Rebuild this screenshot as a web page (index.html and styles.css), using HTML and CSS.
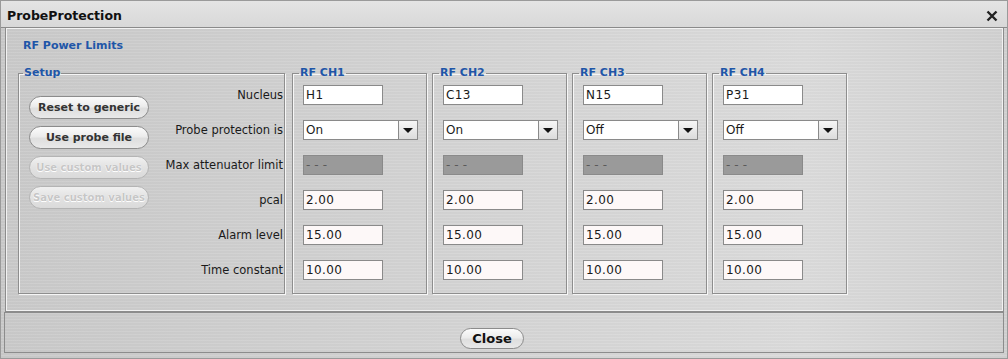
FILE: index.html
```html
<!DOCTYPE html>
<html lang="en">
<head>
    <meta charset="UTF-8">
    <title>ProbeProtection</title>
    <link rel="stylesheet" href="styles.css">
</head>
<body>
    <div class="window">
        <div class="titlebar">
            <span class="title">ProbeProtection</span>
            <svg class="title-close" width="12" height="12" viewBox="0 0 12 12">
                <path d="M1.5 1.5 L10.5 10.5 M10.5 1.5 L1.5 10.5" stroke="#222" stroke-width="2.4" fill="none"/>
            </svg>
        </div>
        <div class="frame">
            <div class="panel">
                <div class="panel-title">RF Power Limits</div>
                <div class="groups">
                    <fieldset class="group setup">
                        <legend>Setup</legend>
                        <div class="setup-inner">
                            <div class="buttons">
                                <button class="pill">Reset to generic</button>
                                <button class="pill">Use probe file</button>
                                <button class="pill" disabled>Use custom values</button>
                                <button class="pill" disabled>Save custom values</button>
                            </div>
                            <div class="labels">
                                <div class="row">Nucleus</div>
                                <div class="row">Probe protection is</div>
                                <div class="row">Max attenuator limit</div>
                                <div class="row">pcal</div>
                                <div class="row">Alarm level</div>
                                <div class="row">Time constant</div>
                            </div>
                        </div>
                    </fieldset>

                    <fieldset class="group channel">
                        <legend>RF CH1</legend>
                        <div class="fields">
                            <div class="field plain">H1</div>
                            <div class="combo"><span class="combo-text">On</span><span class="combo-btn"><i class="arrow"></i></span></div>
                            <div class="field off">---</div>
                            <div class="field">2.00</div>
                            <div class="field">15.00</div>
                            <div class="field">10.00</div>
                        </div>
                    </fieldset>

                    <fieldset class="group channel">
                        <legend>RF CH2</legend>
                        <div class="fields">
                            <div class="field plain">C13</div>
                            <div class="combo"><span class="combo-text">On</span><span class="combo-btn"><i class="arrow"></i></span></div>
                            <div class="field off">---</div>
                            <div class="field">2.00</div>
                            <div class="field">15.00</div>
                            <div class="field">10.00</div>
                        </div>
                    </fieldset>

                    <fieldset class="group channel">
                        <legend>RF CH3</legend>
                        <div class="fields">
                            <div class="field plain">N15</div>
                            <div class="combo"><span class="combo-text">Off</span><span class="combo-btn"><i class="arrow"></i></span></div>
                            <div class="field off">---</div>
                            <div class="field">2.00</div>
                            <div class="field">15.00</div>
                            <div class="field">10.00</div>
                        </div>
                    </fieldset>

                    <fieldset class="group channel">
                        <legend>RF CH4</legend>
                        <div class="fields">
                            <div class="field plain">P31</div>
                            <div class="combo"><span class="combo-text">Off</span><span class="combo-btn"><i class="arrow"></i></span></div>
                            <div class="field off">---</div>
                            <div class="field">2.00</div>
                            <div class="field">15.00</div>
                            <div class="field">10.00</div>
                        </div>
                    </fieldset>
                </div>
            </div>
            <div class="footer">
                <button class="pill close-btn">Close</button>
            </div>
        </div>
    </div>
</body>
</html>
```

FILE: styles.css
```css
body {
    margin: 0;
    font-family: "DejaVu Sans", sans-serif;
    background: #c8c8c8;
}
.window {
    width: 1008px;
    height: 359px;
    box-sizing: border-box;
    border: 1px solid #9a9a9a;
    background:
        repeating-linear-gradient(180deg, rgba(255,255,255,0.05) 0 1px, rgba(0,0,0,0.02) 1px 3px),
        linear-gradient(90deg, #cbcbcb 0%, #d4d4d4 40%, #dcdcdc 80%, #d2d2d2 100%);
}
.titlebar {
    height: 27px;
    border-bottom: 1px solid #8a8a8a;
    display: flex;
    align-items: center;
    justify-content: space-between;
    padding: 3px 9px 0 6px;
    box-sizing: border-box;
    background: linear-gradient(180deg, #e4e4e4, #d8d8d8);
}
.title {
    font-weight: bold;
    font-size: 12.5px;
    color: #111;
}
.title-close {
    display: block;
}
.frame {
    padding: 0 3px 4px 4px;
}
.panel {
    height: 284px;
    box-sizing: border-box;
    border: 1px solid #8c8c8c;
    border-top: none;
    box-shadow: inset 1px 1px 0 #f2f2f2, inset -1px -1px 0 #f2f2f2;
    padding: 11px 0 0 12px;
}
.panel-title {
    font-size: 11px;
    font-weight: bold;
    line-height: 14px;
    color: #1f56a8;
    padding-left: 5px;
    margin-bottom: 13px;
}
.groups {
    display: flex;
    align-items: flex-start;
}
.group {
    margin: 0;
    border: 1px solid #8e8e8e;
    box-shadow: inset 1px 1px 0 #f6f6f6, 1px 1px 0 #f6f6f6;
    padding: 5px 1px 13px 4px;
    min-width: 0;
}
.group legend {
    font-size: 11px;
    font-weight: bold;
    line-height: 14px;
    color: #1f56a8;
    padding: 0 1px;
}
.setup {
    width: 267px;
    box-sizing: border-box;
    margin-right: 7px;
}
.channel {
    width: 135px;
    box-sizing: border-box;
    margin-right: 5px;
    padding-left: 6px;
}
.setup-inner {
    display: flex;
}
.buttons {
    width: 120px;
    margin: 11px 0 0 6px;
    display: flex;
    flex-direction: column;
    gap: 7px;
}
.pill {
    height: 23px;
    border: 1px solid #8c8c8c;
    border-radius: 12px;
    background: linear-gradient(180deg, #fbfbfb 0%, #ececec 45%, #dedede 55%, #e9e9e9 100%);
    font-family: "DejaVu Sans", sans-serif;
    font-size: 11px;
    font-weight: bold;
    color: #333;
    padding: 0;
    white-space: nowrap;
}
.pill:disabled {
    border-color: #b4b4b4;
    color: #c6c6c6;
    font-size: 10px;
    text-shadow: 0 0 1px #fff, 0 1px 0 #fff;
    background: linear-gradient(180deg, #f0f0f0 0%, #e2e2e2 50%, #dadada 100%);
}
.labels {
    flex: 1;
    display: flex;
    flex-direction: column;
    gap: 15px;
    text-align: right;
}
.row {
    height: 20px;
    line-height: 20px;
    font-size: 11.5px;
    color: #1a1a1a;
}
.fields {
    margin-left: 4px;
    display: flex;
    flex-direction: column;
    gap: 15px;
}
.field {
    width: 80px;
    height: 20px;
    box-sizing: border-box;
    border: 1px solid #8a8a8a;
    background: #fdf8f8;
    font-size: 12px;
    line-height: 18px;
    padding-left: 2px;
    letter-spacing: 0.4px;
    color: #1a1a1a;
}
.field.plain {
    background: #fff;
}
.field.off {
    background: #9a9a9a;
    color: #5a5a5a;
    letter-spacing: 4px;
}
.combo {
    width: 115px;
    height: 20px;
    box-sizing: border-box;
    border: 1px solid #8a8a8a;
    display: flex;
    background: #fff;
}
.combo-text {
    flex: 1;
    font-size: 12px;
    line-height: 18px;
    padding-left: 2px;
    color: #1a1a1a;
}
.combo-btn {
    width: 18px;
    border-left: 1px solid #8a8a8a;
    background: linear-gradient(180deg, #f6f6f6, #dcdcdc);
    display: flex;
    align-items: center;
    justify-content: center;
}
.arrow {
    width: 0;
    height: 0;
    border-left: 5px solid transparent;
    border-right: 5px solid transparent;
    border-top: 5px solid #111;
}
.footer {
    height: 41px;
    box-sizing: border-box;
    border: 1px solid #8c8c8c;
    margin-left: -1px;
    display: flex;
    justify-content: center;
    align-items: flex-start;
    padding: 15px 24px 0 0;
}
.close-btn {
    width: 64px;
    height: 21px;
    font-size: 13px;
    color: #111;
}
```
